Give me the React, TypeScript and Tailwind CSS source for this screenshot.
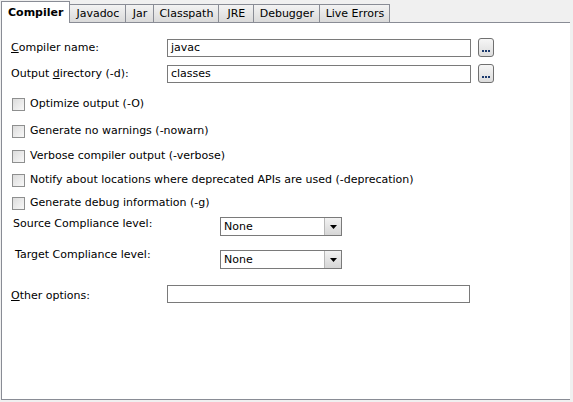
import { ReactNode } from "react";

const tabs = [
  { label: "Compiler", w: "" },
  { label: "Javadoc", w: "w-[56px]" },
  { label: "Jar", w: "w-[28px]" },
  { label: "Classpath", w: "w-[65px]" },
  { label: "JRE", w: "w-[35px]" },
  { label: "Debugger", w: "w-[66px]" },
  { label: "Live Errors", w: "w-[70px]" },
];

const checks = [
  { label: "Optimize output (-O)", mt: "mt-[13px]" },
  { label: "Generate no warnings (-nowarn)", mt: "mt-[11px]" },
  { label: "Verbose compiler output (-verbose)", mt: "mt-[9px]" },
  { label: "Notify about locations where deprecated APIs are used (-deprecation)", mt: "mt-[8px]" },
  { label: "Generate debug information (-g)", mt: "mt-[7px]" },
];

const Field = ({ value, w }: { value?: string; w: string }) => (
  <div className={`${w} h-[18px] border border-[#7a7a7a] bg-white pl-[3px] leading-[16px]`}>{value}</div>
);

const DotsButton = () => (
  <div className="ml-[7px] w-[16px] h-[19px] rounded-[3px] border border-[#707070] bg-gradient-to-b from-[#f6f6f6] to-[#dcdcdc] flex items-end justify-center pb-[4px]">
    <div className="flex gap-[1px]">
      <div className="w-[2px] h-[2px] bg-[#1c3a6e]" />
      <div className="w-[2px] h-[2px] bg-[#1c3a6e]" />
      <div className="w-[2px] h-[2px] bg-[#1c3a6e]" />
    </div>
  </div>
);

const Combo = () => (
  <div className="w-[122px] h-[19px] border border-[#7a7a7a] bg-white flex items-center">
    <span className="flex-1 pl-[3px] leading-[17px]">None</span>
    <div className="w-[17px] h-[17px] border-l border-[#b8b8b8] bg-gradient-to-b from-[#f2f2f2] to-[#d6d6d6] flex items-center justify-center">
      <svg width="7" height="4" viewBox="0 0 7 4">
        <path d="M0 0h7L3.5 4z" fill="#000" />
      </svg>
    </div>
  </div>
);

const Check = ({ children, mt }: { children: ReactNode; mt: string }) => (
  <div className={`flex items-center ${mt} pl-[10px]`}>
    <div className="w-[13px] h-[13px] border border-[#8e8f8f] bg-gradient-to-br from-[#dcdcdc] to-[#f8f8f8]" />
    <span className="ml-[5px]">{children}</span>
  </div>
);

export default function App() {
  return (
    <div
      className="w-[573px] h-[402px] bg-[#f0f0f0] text-[11px] leading-[16px] text-black"
      style={{ fontFamily: '"DejaVu Sans", Tahoma, sans-serif' }}
    >
      <div className="flex items-end h-[22px] pl-[1px]">
        {tabs.map((t, i) =>
          i === 0 ? (
            <div
              key={t.label}
              className="h-[22px] px-[6px] border border-b-0 border-[#898c95] bg-white font-bold flex items-center relative z-10 -mb-[1px]"
            >
              {t.label}
            </div>
          ) : (
            <div
              key={t.label}
              className={`${t.w} h-[18px] border border-l-0 border-b-0 border-[#898c95] bg-gradient-to-b from-[#f3f3f3] to-[#dadada] flex items-center justify-center`}
            >
              {t.label}
            </div>
          )
        )}
      </div>
      <div className="ml-[1px] w-[569px] h-[378px] bg-white border-t border-l border-b border-[#898c95]">
        <div className="flex items-center mt-[15px] pl-[9px]">
          <span className="w-[156px]">
            <u>C</u>ompiler name:
          </span>
          <Field value="javac" w="w-[304px]" />
          <DotsButton />
        </div>
        <div className="flex items-center mt-[7px] pl-[9px]">
          <span className="w-[156px]">
            Output <u>d</u>irectory (-d):
          </span>
          <Field value="classes" w="w-[304px]" />
          <DotsButton />
        </div>
        {checks.map((c) => (
          <Check key={c.label} mt={c.mt}>
            {c.label}
          </Check>
        ))}
        <div className="flex items-start mt-[5px] pl-[11px]">
          <span className="w-[207px]">Source Compliance level:</span>
          <div className="mt-[1px]">
            <Combo />
          </div>
        </div>
        <div className="flex items-start mt-[11px] pl-[13px]">
          <span className="w-[205px]">Target Compliance level:</span>
          <div className="mt-[3px]">
            <Combo />
          </div>
        </div>
        <div className="flex items-start mt-[16px] pl-[9px]">
          <span className="w-[156px] pt-[3px]">
            <u>O</u>ther options:
          </span>
          <Field w="w-[303px]" />
        </div>
      </div>
    </div>
  );
}
